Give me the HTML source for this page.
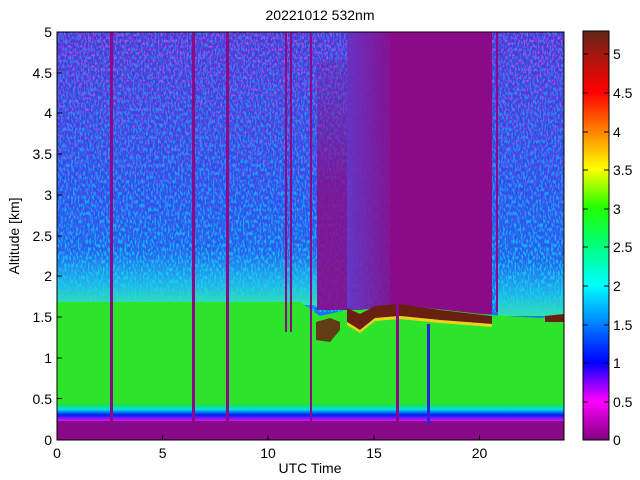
<!DOCTYPE html>
<html><head><meta charset="utf-8"><style>
html,body{margin:0;padding:0;background:#fff;width:640px;height:480px;overflow:hidden}
svg{display:block;font-family:"Liberation Sans",sans-serif}
</style></head><body>
<svg width="640" height="480" viewBox="0 0 640 480">
<defs>
<linearGradient id="cb" x1="0" y1="1" x2="0" y2="0">
<stop offset="0" stop-color="#800080"/>
<stop offset="0.095" stop-color="#ff00ff"/>
<stop offset="0.19" stop-color="#0000ff"/>
<stop offset="0.284" stop-color="#0080ff"/>
<stop offset="0.379" stop-color="#00ffff"/>
<stop offset="0.473" stop-color="#00ff80"/>
<stop offset="0.568" stop-color="#20ff00"/>
<stop offset="0.663" stop-color="#ffff00"/>
<stop offset="0.757" stop-color="#ff8000"/>
<stop offset="0.852" stop-color="#ff0000"/>
<stop offset="0.947" stop-color="#a01810"/>
<stop offset="1" stop-color="#602818"/>
</linearGradient>
<linearGradient id="sky" x1="0" y1="0" x2="0" y2="1">
<stop offset="0" stop-color="#4838d8"/>
<stop offset="0.4" stop-color="#2a50ee"/>
<stop offset="0.75" stop-color="#1a78f0"/>
<stop offset="1" stop-color="#10b8ec"/>
</linearGradient>
<linearGradient id="cyfade" x1="0" y1="0" x2="0" y2="1">
<stop offset="0" stop-color="#fff" stop-opacity="0.35"/>
<stop offset="0.7" stop-color="#fff" stop-opacity="0.6"/>
<stop offset="1" stop-color="#fff" stop-opacity="0.9"/>
</linearGradient>
<linearGradient id="mgfade" x1="0" y1="0" x2="0" y2="1">
<stop offset="0" stop-color="#fff" stop-opacity="1"/>
<stop offset="0.6" stop-color="#fff" stop-opacity="0.4"/>
<stop offset="1" stop-color="#fff" stop-opacity="0"/>
</linearGradient>
<linearGradient id="lowcy" x1="0" y1="0" x2="0" y2="1">
<stop offset="0" stop-color="#20c8f0" stop-opacity="0"/>
<stop offset="0.6" stop-color="#20d0e8" stop-opacity="0.7"/>
<stop offset="1" stop-color="#30e0b0" stop-opacity="1"/>
</linearGradient>
<linearGradient id="pv" x1="0" y1="0" x2="0" y2="1">
<stop offset="0" stop-color="#8a0a88" stop-opacity="0.2"/>
<stop offset="0.5" stop-color="#8a0a88" stop-opacity="0.8"/>
<stop offset="1" stop-color="#8a0a88" stop-opacity="0.9"/>
</linearGradient>
<mask id="mc"><rect x="57" y="32" width="507" height="280" fill="url(#cyfade)"/></mask>
<mask id="mm"><rect x="57" y="32" width="507" height="280" fill="url(#mgfade)"/></mask>
<linearGradient id="trans" x1="0" y1="0" x2="1" y2="0">
<stop offset="0" stop-color="#6a30c0"/>
<stop offset="1" stop-color="#8a0a88"/>
</linearGradient>
<linearGradient id="bl" x1="0" y1="0" x2="0" y2="1">
<stop offset="0" stop-color="#20e040"/>
<stop offset="0.3" stop-color="#00e0e0"/>
<stop offset="0.6" stop-color="#0020f0"/>
<stop offset="1" stop-color="#ff10ff"/>
</linearGradient>
<filter id="ncy" x="0" y="0" width="100%" height="100%">
<feTurbulence type="fractalNoise" baseFrequency="0.6 0.25" numOctaves="1" seed="3"/>
<feColorMatrix values="0 0 0 0 0  0 0 0 0 0.8  0 0 0 0 0.95  5 0 0 0 -2.3"/>
</filter>
<filter id="nmg" x="0" y="0" width="100%" height="100%">
<feTurbulence type="fractalNoise" baseFrequency="0.7 0.35" numOctaves="1" seed="11"/>
<feColorMatrix values="0 0 0 0 0.75  0 0 0 0 0.05  0 0 0 0 0.8  5 0 0 0 -2.6"/>
</filter>
</defs>
<text x="320" y="20" font-size="14" text-anchor="middle">20221012 532nm</text>
<!-- plot -->
<rect x="57" y="32" width="507" height="408" fill="url(#sky)"/>
<rect x="57" y="32" width="507" height="280" filter="url(#ncy)" mask="url(#mc)"/>
<rect x="57" y="32" width="507" height="280" filter="url(#nmg)" mask="url(#mm)"/>
<rect x="57" y="250" width="260" height="55" fill="url(#lowcy)"/>
<rect x="498" y="260" width="66" height="56" fill="url(#lowcy)"/>
<rect x="347" y="32" width="45" height="280" fill="url(#trans)" opacity="0.9"/>
<rect x="317" y="60" width="30" height="250" fill="url(#pv)"/>
<rect x="390" y="32" width="102" height="282" fill="#8a0a88"/>
<!-- green -->
<polygon points="57,302 300,302 320,316 347,310 360,310 400,305 490,315 540,318 564,315 564,412 57,412" fill="#2ee42a"/>
<rect x="57" y="404" width="507" height="18" fill="url(#bl)"/>
<rect x="57" y="421" width="507" height="19" fill="#890a88"/>
<!-- brown layer -->
<polygon points="347,308 360,314 375,306 400,304 440,310 492,316 492,324 440,320 400,316 375,318 360,330 347,322" fill="#6a2010"/>
<polygon points="316,322 330,318 340,322 340,330 330,342 316,340" fill="#6a2010" opacity="0.85"/>
<polygon points="545,316 564,314 564,322 545,322" fill="#6a2010"/>
<polygon points="347,322 360,330 375,318 400,316 440,320 492,324 492,327 440,323 400,319 375,321 360,333 347,325" fill="#f0d020"/>
<!-- vertical lines -->
<g fill="#8a0a88">
<rect x="110" y="32" width="3" height="390"/>
<rect x="192" y="32" width="3" height="395"/>
<rect x="226" y="32" width="3" height="395"/>
<rect x="285" y="32" width="2" height="300"/>
<rect x="290" y="32" width="2" height="300"/>
<rect x="310" y="32" width="2" height="395"/>
<rect x="396" y="300" width="3" height="125"/>
<rect x="466" y="32" width="2" height="280"/>
<rect x="496" y="32" width="2" height="280"/>
</g>
<rect x="427" y="324" width="3" height="100" fill="#3020e0"/>
<rect x="57" y="32" width="507" height="408" fill="none" stroke="#000" stroke-width="1"/>
<g stroke="#000" stroke-width="1">
<line x1="57" y1="398.5" x2="62" y2="398.5"/><line x1="57" y1="358" x2="62" y2="358"/><line x1="57" y1="317" x2="62" y2="317"/><line x1="57" y1="276" x2="62" y2="276"/><line x1="57" y1="236" x2="62" y2="236"/><line x1="57" y1="195" x2="62" y2="195"/><line x1="57" y1="154" x2="62" y2="154"/><line x1="57" y1="113" x2="62" y2="113"/><line x1="57" y1="73" x2="62" y2="73"/>
<line x1="162.6" y1="440" x2="162.6" y2="435"/><line x1="268" y1="440" x2="268" y2="435"/><line x1="374" y1="440" x2="374" y2="435"/><line x1="479.5" y1="440" x2="479.5" y2="435"/>
</g>
<g font-size="14" text-anchor="end">
<text x="52" y="445">0</text><text x="52" y="404">0.5</text><text x="52" y="363">1</text><text x="52" y="322">1.5</text><text x="52" y="281">2</text><text x="52" y="241">2.5</text><text x="52" y="200">3</text><text x="52" y="159">3.5</text><text x="52" y="118">4</text><text x="52" y="78">4.5</text><text x="52" y="37">5</text>
</g>
<g font-size="14" text-anchor="middle">
<text x="57" y="458">0</text><text x="162.6" y="458">5</text><text x="268" y="458">10</text><text x="374" y="458">15</text><text x="479.5" y="458">20</text>
<text x="310" y="473">UTC Time</text>
</g>
<text transform="translate(19,236) rotate(-90)" font-size="14" text-anchor="middle">Altitude [km]</text>
<!-- colorbar -->
<rect x="583" y="31" width="26" height="409" fill="url(#cb)" stroke="#000" stroke-width="1"/>
<g stroke="#000">
<line x1="604" y1="402" x2="609" y2="402"/><line x1="604" y1="363" x2="609" y2="363"/><line x1="604" y1="325" x2="609" y2="325"/><line x1="604" y1="286" x2="609" y2="286"/><line x1="604" y1="247" x2="609" y2="247"/><line x1="604" y1="209" x2="609" y2="209"/><line x1="604" y1="170" x2="609" y2="170"/><line x1="604" y1="132" x2="609" y2="132"/><line x1="604" y1="93" x2="609" y2="93"/><line x1="604" y1="54" x2="609" y2="54"/>
<line x1="583" y1="402" x2="588" y2="402"/><line x1="583" y1="363" x2="588" y2="363"/><line x1="583" y1="325" x2="588" y2="325"/><line x1="583" y1="286" x2="588" y2="286"/><line x1="583" y1="247" x2="588" y2="247"/><line x1="583" y1="209" x2="588" y2="209"/><line x1="583" y1="170" x2="588" y2="170"/><line x1="583" y1="132" x2="588" y2="132"/><line x1="583" y1="93" x2="588" y2="93"/><line x1="583" y1="54" x2="588" y2="54"/>
</g>
<g font-size="14">
<text x="613" y="445">0</text><text x="613" y="407">0.5</text><text x="613" y="368">1</text><text x="613" y="330">1.5</text><text x="613" y="291">2</text><text x="613" y="252">2.5</text><text x="613" y="214">3</text><text x="613" y="175">3.5</text><text x="613" y="137">4</text><text x="613" y="98">4.5</text><text x="613" y="59">5</text>
</g>
</svg>
</body></html>
